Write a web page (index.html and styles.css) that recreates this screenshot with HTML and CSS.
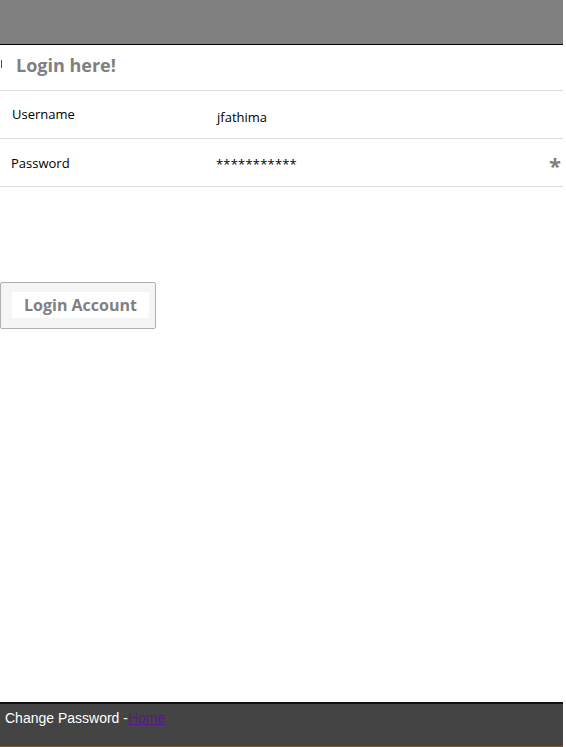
FILE: index.html
```html
<!DOCTYPE html>
<html>
<head>
<meta charset="utf-8">
<link rel="stylesheet" href="styles.css">
</head>
<body>
<div class="page">
  <header class="topbar"></header>
  <main class="content">
    <h2 class="title"><span class="mark"></span>Login here!</h2>
    <div class="row">
      <div class="label">Username</div>
      <div class="value user">jfathima</div>
    </div>
    <div class="row">
      <div class="label pw">Password</div>
      <div class="value pwv">***********</div>
      <div class="req">*</div>
    </div>
    <div class="spacer"></div>
    <div class="btnwrap">
      <button class="btn"><span class="btn-inner">Login Account</span></button>
    </div>
  </main>
  <footer class="footer">Change Password -<a href="#" class="home">Home</a></footer>
</div>
</body>
</html>
```

FILE: styles.css
```css
html, body {
  margin: 0;
  padding: 0;
  background: #ffffff;
}
.page {
  width: 563px;
  height: 747px;
  display: flex;
  flex-direction: column;
  font-family: "Open Sans", "Noto Sans", sans-serif;
}
.topbar {
  height: 44px;
  background: #808080;
  border-bottom: 1px solid #000;
  flex: none;
}
.content {
  flex: 1;
  display: flex;
  flex-direction: column;
}
.title {
  margin: 0;
  height: 46px;
  box-sizing: border-box;
  border-bottom: 1px solid #dcdcdc;
  display: flex;
  align-items: center;
  padding-left: 16px;
  padding-bottom: 6px;
  font-size: 18px;
  font-weight: 700;
  color: #808080;
  position: relative;
}
.mark {
  position: absolute;
  left: 1px;
  top: 15px;
  width: 1px;
  height: 8px;
  background: #555;
}
.row {
  height: 48px;
  border-bottom: 1px solid #dcdcdc;
  box-sizing: border-box;
  display: flex;
  align-items: center;
  font-size: 13px;
  color: #000;
}
.label {
  width: 205px;
  padding-left: 12px;
  margin-top: -2px;
}
.label.pw {
  padding-left: 11px;
  margin-top: 0;
}
.value {
  flex: 1;
}
.value.user {
  margin-top: 4px;
}
.value.pwv {
  margin-top: 2px;
  letter-spacing: 0.2px;
}
.req {
  color: #808080;
  font-size: 22px;
  font-weight: 700;
  padding-right: 2px;
  margin-top: 4px;
}
.spacer {
  height: 95px;
}
.btnwrap {
  display: flex;
}
.btn {
  width: 156px;
  height: 47px;
  margin: 0;
  padding: 0;
  background: #f5f5f5;
  border: 1px solid #b0b0b0;
  border-radius: 2px;
  display: flex;
  align-items: center;
  justify-content: center;
  font-family: "Open Sans", "Noto Sans", sans-serif;
}
.btn-inner {
  background: #fff;
  width: 137px;
  height: 26px;
  display: flex;
  align-items: center;
  justify-content: center;
  font-size: 16px;
  font-weight: 700;
  color: #808080;
  margin-left: 5px;
  margin-top: -1px;
}
.footer {
  flex: none;
  height: 45px;
  background: #444444;
  border-top: 2px solid #111;
  border-bottom: 1px solid #7a5a30;
  box-sizing: border-box;
  padding: 6px 0 0 5px;
  color: #fff;
  font-family: "Liberation Sans", Arial, sans-serif;
  font-size: 14px;
}
.home {
  color: #551a8b;
  text-decoration: underline;
}
```
